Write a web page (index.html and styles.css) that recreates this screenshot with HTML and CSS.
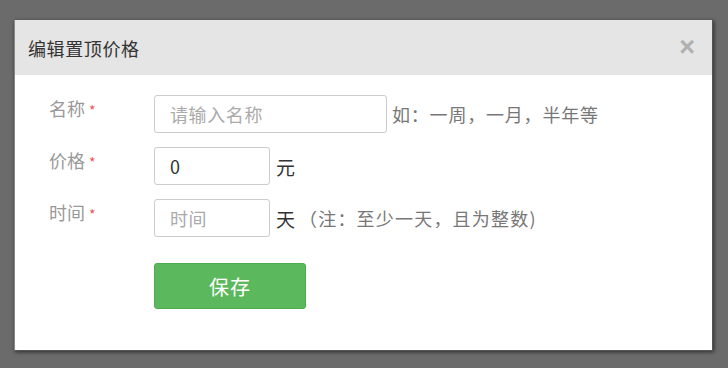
FILE: index.html
```html
<!DOCTYPE html>
<html lang="zh-CN">
<head>
    <meta charset="UTF-8">
    <title>编辑置顶价格</title>
    <link rel="stylesheet" href="styles.css">
</head>
<body>
    <div class="dialog">
        <div class="dialog-header">
            <span class="dialog-title">编辑置顶价格</span>
            <span class="close">×</span>
        </div>
        <div class="dialog-body">
            <div class="form-row">
                <label class="form-label">名称 <i>*</i></label>
                <input class="input input-long" type="text" placeholder="请输入名称">
                <span class="hint">如：一周，一月，半年等</span>
            </div>
            <div class="form-row">
                <label class="form-label">价格 <i>*</i></label>
                <input class="input input-short" type="text" value="0">
                <span class="unit">元</span>
            </div>
            <div class="form-row">
                <label class="form-label">时间 <i>*</i></label>
                <input class="input input-short" type="text" placeholder="时间">
                <span class="unit">天</span>
                <span class="hint note">（注：至少一天，且为整数)</span>
            </div>
            <div class="form-actions">
                <button class="btn-save">保存</button>
            </div>
        </div>
    </div>
</body>
</html>
```

FILE: styles.css
```css
* {
    margin: 0;
    padding: 0;
    box-sizing: border-box;
}

body {
    font-family: "Noto Sans CJK SC", "Noto Sans", sans-serif;
    background: #6b6b6b;
    width: 728px;
    height: 368px;
    padding: 20px 0 0 14px;
    overflow: hidden;
}

.dialog {
    width: 699px;
    height: 331px;
    background: #fff;
    box-shadow: 1px 1px 4px rgba(0, 0, 0, 0.6);
    border: 1px solid #555;
    border-top: none;
    border-left: 1px solid #888;
}

.dialog-header {
    height: 55px;
    background: #e5e5e5;
    display: flex;
    align-items: center;
    justify-content: space-between;
    padding: 0 17px 0 13px;
}

.dialog-title {
    font-size: 18px;
    letter-spacing: 0.6px;
    color: #333;
}

.close {
    font-size: 27px;
    font-weight: 700;
    color: #b0b0b0;
    line-height: 1;
    font-family: "Liberation Sans", sans-serif;
}

.dialog-body {
    padding: 20px 0 0 34px;
}

.form-row {
    display: flex;
    align-items: center;
    height: 38px;
    margin-bottom: 14px;
}

.form-label {
    width: 105px;
    align-self: flex-start;
    padding-top: 0;
    font-size: 18px;
    color: #999;
}

.form-label i {
    font-style: normal;
    color: #e55;
    font-size: 14px;
}

.input {
    height: 38px;
    border: 1px solid #ccc;
    border-radius: 3px;
    padding: 0 15px;
    font-family: inherit;
    font-size: 18px;
    letter-spacing: 0.6px;
    color: #333;
    outline: none;
}

.input::placeholder {
    color: #aaa;
}

.input-long {
    width: 233px;
}

.input-short {
    width: 116px;
}

.hint {
    margin-left: 5px;
    font-size: 18px;
    letter-spacing: 0.8px;
    color: #777;
}

.unit {
    margin-left: 6px;
    font-size: 19px;
    color: #333;
}

.note {
    margin-left: 4px;
    letter-spacing: 1.2px;
}

.form-actions {
    padding: 12px 0 0 105px;
}

.btn-save {
    width: 152px;
    height: 46px;
    border: 1px solid #4cae4c;
    border-radius: 3px;
    background: #5cb85c;
    color: #fff;
    font-family: inherit;
    font-size: 20px;
    letter-spacing: 1px;
}
```
